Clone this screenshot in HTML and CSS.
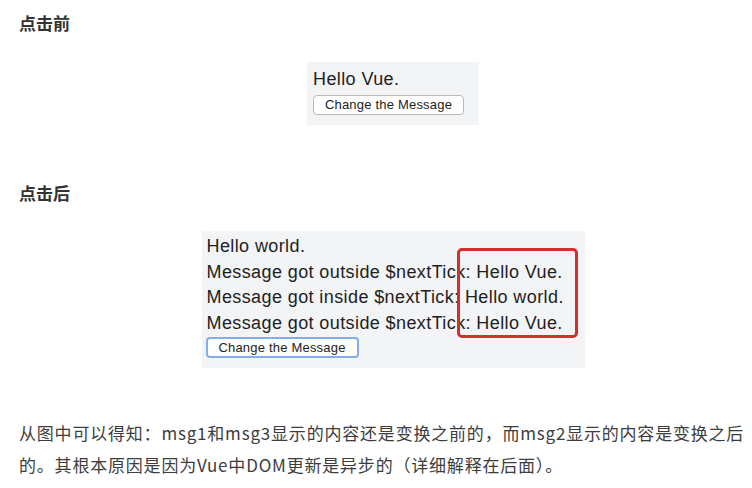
FILE: index.html
```html
<!DOCTYPE html>
<html>
<head>
<meta charset="utf-8">
<link rel="stylesheet" href="styles.css">
</head>
<body>
<div class="page">
  <h3 class="heading first">点击前</h3>
  <div class="figure">
    <div class="shot shot-before">
      <div class="line">Hello Vue.</div>
      <button class="btn">Change the Message</button>
    </div>
  </div>
  <h3 class="heading second">点击后</h3>
  <div class="figure">
    <div class="shot shot-after">
      <div class="line">Hello world.</div>
      <div class="line">Message got outside $nextTick: Hello Vue.</div>
      <div class="line">Message got inside $nextTick: Hello world.</div>
      <div class="line">Message got outside $nextTick: Hello Vue.</div>
      <button class="btn btn-focus">Change the Message</button>
      <div class="highlight"></div>
    </div>
  </div>
  <p class="text">从图中可以得知：msg1和msg3显示的内容还是变换之前的，而msg2显示的内容是变换之后的。其根本原因是因为Vue中DOM更新是异步的（详细解释在后面）。</p>
</div>
</body>
</html>
```

FILE: styles.css
```css
html, body {
  margin: 0;
  padding: 0;
  background: #fff;
  overflow: hidden;
}
.page {
  width: 752px;
  padding-left: 19px;
  box-sizing: border-box;
  font-family: "Microsoft YaHei", "Noto Sans CJK SC", sans-serif;
  color: #333;
}
.heading {
  margin: 0;
  font-size: 17px;
  font-weight: bold;
  line-height: 26px;
  color: #333;
}
.heading.first {
  padding-top: 10px;
}
.figure {
  display: flex;
  justify-content: center;
  padding-left: 15px;
}
.shot {
  position: relative;
  background: #f3f4f6;
  font-family: "Liberation Sans", Arial, sans-serif;
  color: #1e1e1e;
  font-size: 18px;
  letter-spacing: 0.4px;
  box-sizing: border-box;
}
.shot-before {
  width: 172px;
  height: 63px;
  margin-top: 26px;
  margin-bottom: 55px;
  padding: 6px 0 0 6px;
}
.shot-after {
  width: 383px;
  height: 137px;
  margin-top: 25px;
  padding: 3px 0 0 5px;
}
.line {
  line-height: 25.5px;
  white-space: nowrap;
}
.shot-before .line {
  line-height: 23px;
}
.btn {
  display: block;
  width: 151px;
  height: 20px;
  margin-top: 4px;
  padding: 0;
  background: #fff;
  border: 1px solid #b9b9b9;
  border-radius: 4px;
  font-family: "Liberation Sans", Arial, sans-serif;
  font-size: 13px;
  letter-spacing: 0.2px;
  color: #1e1e1e;
  line-height: 18px;
}
.btn-focus {
  margin-top: 1px;
  border: 2px solid #86aee6;
  width: 153px;
  height: 21px;
  margin-left: -1px;
}
.highlight {
  position: absolute;
  left: 255px;
  top: 17px;
  width: 121px;
  height: 90px;
  border: 3px solid #d2302c;
  border-radius: 5px;
  box-sizing: border-box;
}
.text {
  margin: 49px 0 0 0;
  font-size: 17px;
  line-height: 32px;
  color: #3d3d3d;
  letter-spacing: 0.8px;
}
```
